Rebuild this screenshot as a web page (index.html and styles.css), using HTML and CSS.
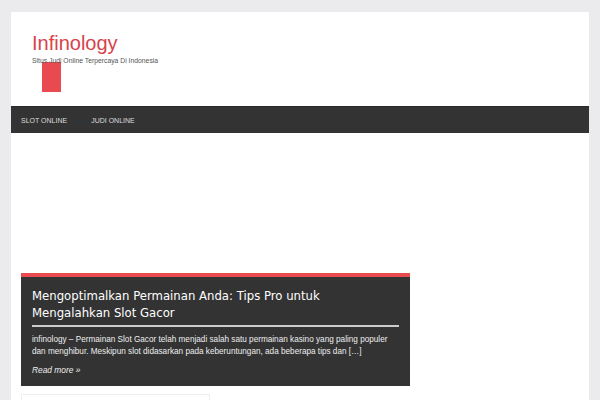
FILE: index.html
```html
<!DOCTYPE html>
<html lang="id">
<head>
  <meta charset="UTF-8">
  <meta name="viewport" content="width=device-width, initial-scale=1.0">
  <title>Infinology</title>
  <link rel="stylesheet" href="styles.css">
</head>
<body>
  <div class="wrapper">
    <header class="header">
      <div class="site-title">Infinology</div>
      <div class="site-desc">Situs Judi Online Terpercaya Di Indonesia</div>
      <div class="logo"></div>
    </header>

    <nav class="nav">
      <a href="#">Slot Online</a>
      <a href="#">Judi Online</a>
    </nav>

    <div class="content">
      <div class="post">
        <h2 class="post-title">Mengoptimalkan Permainan Anda: Tips Pro untuk Mengalahkan Slot Gacor</h2>
        <p class="post-text">infinology – Permainan Slot Gacor telah menjadi salah satu permainan kasino yang paling populer dan menghibur. Meskipun slot didasarkan pada keberuntungan, ada beberapa tips dan […]</p>
        <a class="more" href="#">Read more »</a>
      </div>
      <div class="next-box"></div>
    </div>
  </div>
</body>
</html>
```

FILE: styles.css
```css
html,body{margin:0;padding:0}
body{background:#ebebed;padding-top:12px;font-family:"Liberation Sans",Arial,sans-serif}

.wrapper{margin:0 11px;background:#fff;height:388px;overflow:hidden}

.header{height:94px;padding:0 21px;box-sizing:border-box;padding-top:20px}
.site-title{font-size:20px;line-height:22px;color:#d7434b}
.site-desc{font-size:6.8px;line-height:10px;color:#555;margin-top:2px}
.logo{width:19px;height:30px;background:#e84a4f;margin:-4px 0 0 10px}

.nav{height:27px;background:#333;display:flex;align-items:center;padding:0 10px;border-top:1px solid #2a2a2a;box-sizing:border-box}
.nav a{font-size:7px;text-transform:uppercase;color:#ddd;text-decoration:none;margin-right:24px}

.content{padding:140px 10px 0}
.post{width:389px;box-sizing:border-box;background:#333;border-top:4px solid #e84a4f;padding:11px 11px 10px}
.post-title{margin:0;font-family:"DejaVu Sans",sans-serif;font-weight:normal;font-size:11.7px;line-height:17px;color:#fff;padding-bottom:3px;border-bottom:2px solid #ccc}
.post-text{margin:7px 0 0;font-size:8.2px;line-height:12px;color:#eee}
.more{display:block;margin-top:6px;font-size:8.4px;line-height:12px;font-style:italic;color:#eee;text-decoration:none}

.next-box{width:189px;height:20px;margin-top:8px;border:1px solid #eee;box-sizing:border-box}
```
